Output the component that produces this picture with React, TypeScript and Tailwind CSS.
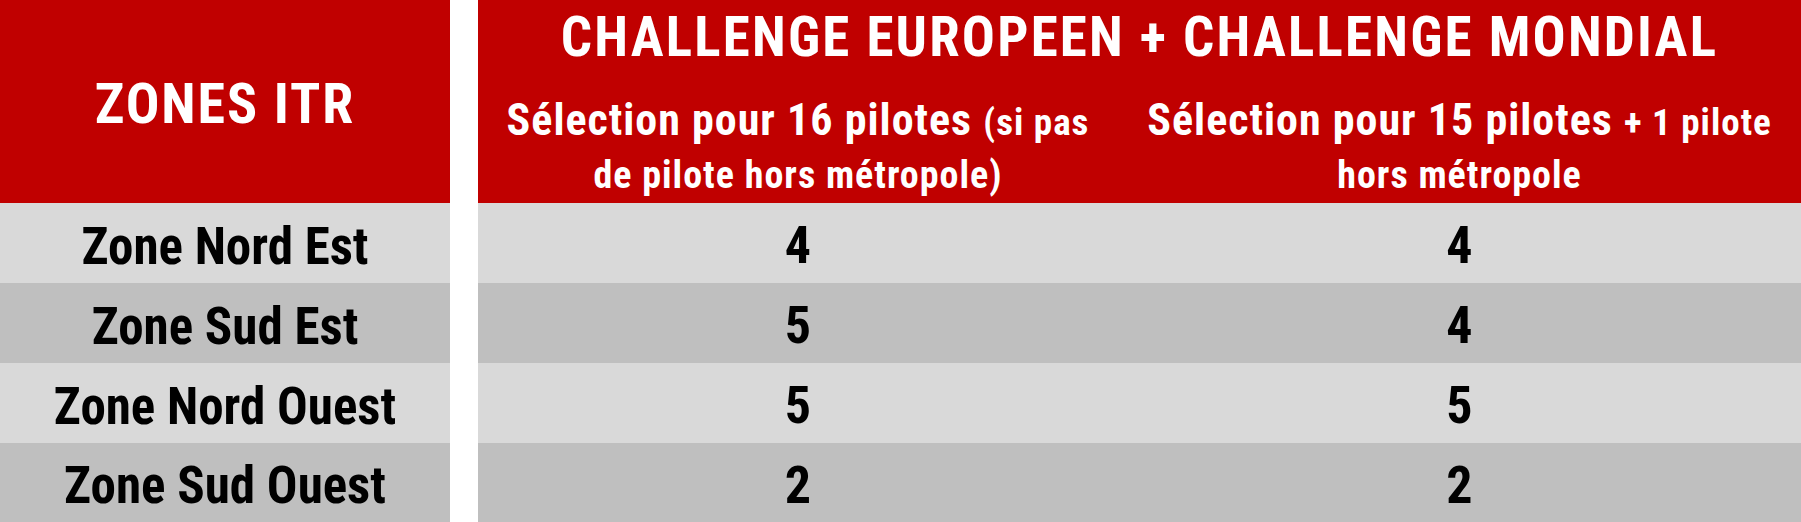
import React from "react";

const font = {
  fontFamily:
    "'Liberation Sans Narrow', 'Arial Narrow', 'Roboto Condensed', 'DejaVu Sans Condensed', 'Liberation Sans', sans-serif",
};

const rows = [
  { zone: "Zone Nord Est", a: "4", b: "4", bg: "bg-[#d9d9d9]" },
  { zone: "Zone Sud Est", a: "5", b: "4", bg: "bg-[#bfbfbf]" },
  { zone: "Zone Nord Ouest", a: "5", b: "5", bg: "bg-[#d9d9d9]" },
  { zone: "Zone Sud Ouest", a: "2", b: "2", bg: "bg-[#bfbfbf]" },
];

export default function App() {
  return (
    <div
      className="w-[1801px] h-[522px] bg-white overflow-hidden grid grid-cols-[450px_28px_640px_683px] grid-rows-[203px_80px_80px_80px_79px] font-bold"
      style={font}
    >
      {/* header left */}
      <div className="bg-[#c00000] flex items-center justify-center pt-[5px] text-white text-[56px] leading-none tracking-[1.9px]">
        ZONES ITR
      </div>
      <div className="row-span-5 bg-white" />
      {/* header right */}
      <div className="col-span-2 bg-[#c00000] text-white flex flex-col">
        <div className="pt-[10px] text-center text-[55px] leading-none tracking-[2.2px]">
          CHALLENGE EUROPEEN + CHALLENGE MONDIAL
        </div>
        <div className="mt-[30px] flex">
          <div className="w-[640px] text-center text-[44px] leading-[50px] tracking-[1px]">
            Sélection pour 16 pilotes <span className="text-[37px]">(si pas</span>
            <br />
            <span className="text-[38px]">de pilote hors métropole)</span>
          </div>
          <div className="flex-1 text-center text-[44px] leading-[50px] tracking-[1px]">
            Sélection pour 15 pilotes <span className="text-[37px]">+ 1 pilote</span>
            <br />
            <span className="text-[38px]">hors métropole</span>
          </div>
        </div>
      </div>
      {rows.map((r, i) => (
        <React.Fragment key={i}>
          <div
            className={`${r.bg} flex items-center justify-center pt-[6px] text-black text-[51px] leading-none`}
            style={{ gridColumn: 1, gridRow: i + 2 }}
          >
            {r.zone}
          </div>
          <div
            className={`${r.bg} flex items-center justify-center pt-[6px] text-black text-[52px] leading-none`}
            style={{ gridColumn: 3, gridRow: i + 2 }}
          >
            {r.a}
          </div>
          <div
            className={`${r.bg} flex items-center justify-center pt-[6px] text-black text-[52px] leading-none`}
            style={{ gridColumn: 4, gridRow: i + 2 }}
          >
            {r.b}
          </div>
        </React.Fragment>
      ))}
    </div>
  );
}
